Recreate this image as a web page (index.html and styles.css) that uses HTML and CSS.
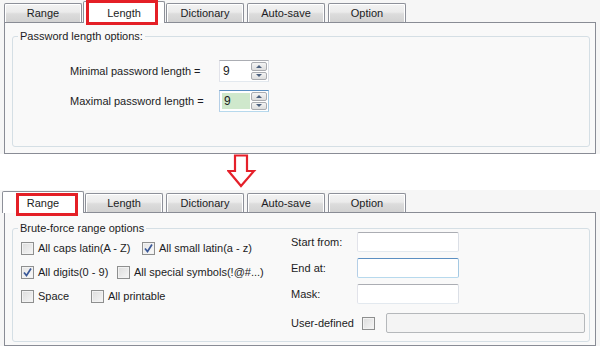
FILE: index.html
```html
<!DOCTYPE html>
<html lang="en">
<head>
    <meta charset="utf-8">
    <link rel="stylesheet" href="styles.css">
    <title>Length and range options</title>
</head>
<body>
    <!-- before: Length tab -->
    <div class="window">
        <div class="tabs">
            <div class="tab">Range</div>
            <div class="tab active mark-length">Length</div>
            <div class="tab">Dictionary</div>
            <div class="tab">Auto-save</div>
            <div class="tab">Option</div>
        </div>
        <div class="panel panel-length">
            <div class="group group-length">
                <span class="legend">Password length options:</span>
                <div class="len-grid">
                    <span>Minimal password length =</span>
                    <div class="spin">
                        <span class="spin-value">9</span>
                        <span class="spin-buttons">
                            <span class="spin-btn up"></span>
                            <span class="spin-btn down"></span>
                        </span>
                    </div>
                    <span>Maximal password length =</span>
                    <div class="spin focus">
                        <span class="spin-value selected">9</span>
                        <span class="spin-buttons">
                            <span class="spin-btn up"></span>
                            <span class="spin-btn down"></span>
                        </span>
                    </div>
                </div>
            </div>
        </div>
    </div>

    <div class="arrow-row">
        <svg width="30" height="35" viewBox="0 0 30 35">
            <polygon points="8,1.5 20,1.5 20,17 27,17 14,32 1.5,17 8,17" fill="#fff" stroke="#e5202a" stroke-width="2.2" stroke-linejoin="miter"/>
        </svg>
    </div>

    <!-- after: Range tab -->
    <div class="window">
        <div class="tabs">
            <div class="tab active mark-range">Range</div>
            <div class="tab">Length</div>
            <div class="tab">Dictionary</div>
            <div class="tab">Auto-save</div>
            <div class="tab">Option</div>
        </div>
        <div class="panel panel-range">
            <div class="group group-range">
                <span class="legend">Brute-force range options</span>
                <div class="range-body">
                    <div class="charsets">
                        <div class="opt-row">
                            <label class="opt opt-caps"><span class="check"></span>All caps latin(A - Z)</label>
                            <label class="opt"><span class="check checked"><svg width="11" height="11" viewBox="0 0 11 11"><path d="M2 5.5 L4.5 8.5 L9 1.5" fill="none" stroke="#3b5998" stroke-width="1.7"/></svg></span>All small latin(a - z)</label>
                        </div>
                        <div class="opt-row">
                            <label class="opt opt-digits"><span class="check checked"><svg width="11" height="11" viewBox="0 0 11 11"><path d="M2 5.5 L4.5 8.5 L9 1.5" fill="none" stroke="#3b5998" stroke-width="1.7"/></svg></span>All digits(0 - 9)</label>
                            <label class="opt"><span class="check"></span>All special symbols(!@#...)</label>
                        </div>
                        <div class="opt-row">
                            <label class="opt opt-space"><span class="check"></span>Space</label>
                            <label class="opt"><span class="check"></span>All printable</label>
                        </div>
                    </div>
                    <div class="fields">
                        <div class="field-row">
                            <span class="field-label">Start from:</span>
                            <span class="field"></span>
                        </div>
                        <div class="field-row">
                            <span class="field-label">End at:</span>
                            <span class="field focus"></span>
                        </div>
                        <div class="field-row">
                            <span class="field-label">Mask:</span>
                            <span class="field"></span>
                        </div>
                        <div class="field-row user-row">
                            <span class="field-label user-label">User-defined</span>
                            <span class="check"></span>
                            <span class="field field-wide disabled"></span>
                        </div>
                    </div>
                </div>
            </div>
        </div>
    </div>
</body>
</html>
```

FILE: styles.css
```css
body {
    margin: 0;
    background: #fff;
    font: 11px "Liberation Sans", Arial, sans-serif;
    color: #1c1c24;
}

.window {
    width: 600px;
    background: #f6f6f6;
}

.tabs {
    display: flex;
    align-items: flex-end;
    gap: 3px;
    height: 22px;
    padding-left: 4px;
    box-sizing: border-box;
}

.tab {
    width: 78px;
    height: 19px;
    box-sizing: border-box;
    border: 1px solid #8d9099;
    border-bottom: none;
    border-radius: 2px 2px 0 0;
    background: linear-gradient(#f3f3f3, #ebebeb 45%, #dcdcdc 55%, #d2d2d2);
    box-shadow: inset 1px 1px 0 #fff, inset -1px 0 0 #fff;
    display: flex;
    align-items: center;
    justify-content: center;
}

.tab.active {
    width: 82px;
    height: 22px;
    margin: 0 -2px -1px;
    background: #fff;
    box-shadow: none;
    position: relative;
    z-index: 1;
}

/* red annotation boxes */
.mark-length::after,
.mark-range::after {
    content: '';
    position: absolute;
    border: 3px solid #e41f26;
}
.mark-length::after {
    top: -2px;
    left: 2px;
    right: 6px;
    bottom: -2px;
}
.mark-range::after {
    top: 1px;
    left: 13px;
    right: 5px;
    bottom: -3px;
}

.panel {
    margin-left: 4px;
    width: 592px;
    box-sizing: border-box;
    border: 1px solid #898c95;
    background: #f9f9f9;
    padding-left: 7px;
    padding-right: 5px;
}
.panel-length {
    padding-top: 13px;
    padding-bottom: 6px;
}
.panel-range {
    padding-top: 15px;
    padding-bottom: 3px;
}

.group {
    position: relative;
    box-sizing: border-box;
    border: 1px solid #d5dfe5;
    border-radius: 3px;
}
.group-length {
    height: 111px;
}
.group-range {
    height: 114px;
}

.legend {
    position: absolute;
    top: -7px;
    left: 5px;
    padding: 0 2px;
    line-height: 13px;
    background: #f9f9f9;
}

/* length page */
.len-grid {
    display: grid;
    grid-template-columns: 149px 50px;
    align-items: center;
    row-gap: 8px;
    padding: 23px 0 0 57px;
}

.spin {
    display: flex;
    width: 50px;
    height: 22px;
    box-sizing: border-box;
    border: 1px solid #abadb3;
    border-color: #abadb3 #dbdfe6 #e3e9ef #e2e3ea;
    background: #fff;
    padding: 1px;
}
.spin.focus {
    border-color: #5b8fc2 #a4c9e3 #b7d9ed #b5cfe7;
}

.spin-value {
    flex: 1;
    padding-left: 2px;
    line-height: 18px;
    font-size: 12px;
}
.spin-value.selected {
    margin: 1px;
    line-height: 16px;
    background: #cfe8cc;
}

.spin-buttons {
    display: flex;
    flex-direction: column;
    gap: 1px;
    width: 16px;
}

.spin-btn {
    flex: 1;
    border: 1px solid #a9abb0;
    border-radius: 2px;
    background: linear-gradient(#f4f4f4, #dedede);
    display: flex;
    align-items: center;
    justify-content: center;
}
.spin-btn::before {
    content: '';
    border-left: 3px solid transparent;
    border-right: 3px solid transparent;
}
.spin-btn.up::before {
    border-bottom: 3px solid #4c607e;
}
.spin-btn.down::before {
    border-top: 3px solid #4c607e;
}

.arrow-row {
    height: 36px;
    padding-left: 227px;
    background: #fff;
}
.arrow-row svg {
    display: block;
}

/* range page */
.range-body {
    display: flex;
    padding: 3px 0 0 8px;
}

.charsets {
    width: 270px;
    padding-top: 9px;
    display: flex;
    flex-direction: column;
    gap: 10px;
}

.opt-row {
    display: flex;
    height: 14px;
}

.opt {
    display: flex;
    align-items: center;
    gap: 4px;
    white-space: nowrap;
}
.opt-caps {
    width: 121px;
}
.opt-digits {
    width: 96px;
}
.opt-space {
    width: 70px;
}

.check {
    width: 13px;
    height: 13px;
    box-sizing: border-box;
    border: 1px solid #8e8f8f;
    background: linear-gradient(135deg, #dcdcdc, #f6f6f6);
    box-shadow: inset 0 0 0 1px #f2f2f2;
    display: flex;
    align-items: center;
    justify-content: center;
    flex: none;
}
.check.checked {
    background: linear-gradient(135deg, #e4e4e4, #fafafa);
}

.fields {
    display: flex;
    flex-direction: column;
    gap: 6px;
}

.field-row {
    display: flex;
    align-items: center;
    height: 20px;
}
.user-row {
    margin-top: 3px;
}

.field-label {
    width: 66px;
}
.user-label {
    width: 71px;
}

.field {
    width: 102px;
    height: 20px;
    box-sizing: border-box;
    border: 1px solid;
    border-color: #abadb3 #dbdfe6 #e3e9ef #e2e3ea;
    border-radius: 2px;
    background: #fff;
}
.field.focus {
    border-color: #5b8fc2 #a4c9e3 #b7d9ed #b5cfe7;
}
.field-wide {
    width: 199px;
    margin-left: 11px;
}
.field.disabled {
    background: #f4f4f4;
    border-color: #b5b8bb;
}
```
